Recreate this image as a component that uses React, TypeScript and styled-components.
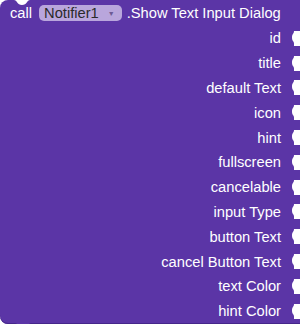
import * as React from 'react';
import styled, { createGlobalStyle } from 'styled-components';

const GlobalStyle = createGlobalStyle`
    html, body {
        margin: 0;
        padding: 0;
        background: #ffffff;
    }
`;

const PURPLE = '#5b35a6';

const params = [
    'id',
    'title',
    'default Text',
    'icon',
    'hint',
    'fullscreen',
    'cancelable',
    'input Type',
    'button Text',
    'cancel Button Text',
    'text Color',
    'hint Color',
];

const Socket = () => (
    <SocketIcon width="8" height="15" viewBox="0 0 8 15">
        <path d="M8 0 H2 C2 3 0 2.5 0 6.5 C0 10.5 2 10 2 12.5 V15 H8 Z" fill="#ffffff" />
    </SocketIcon>
);

export default function App() {
    return (
        <>
            <GlobalStyle />
            <Block>
                <TopNotch width="16" height="6" viewBox="0 0 16 6">
                    <path d="M0 0 C3 0 3 5 8 5 C13 5 13 0 16 0 Z" fill="#ffffff" />
                </TopNotch>
                <Header>
                    <Keyword>call</Keyword>
                    <Dropdown>
                        Notifier1
                        <Arrow>▼</Arrow>
                    </Dropdown>
                    <Keyword>.Show Text Input Dialog</Keyword>
                </Header>
                {params.map((name) => (
                    <Row key={name}>
                        <Label>{name}</Label>
                        <Socket />
                    </Row>
                ))}
                <BottomTab width="16" height="7" viewBox="0 0 16 7">
                    <path d="M0 0 C3 0 4 6 8 6 C12 6 13 0 16 0 Z" fill={PURPLE} />
                </BottomTab>
            </Block>
        </>
    );
}

const Block = styled.div`
    position: relative;
    width: 300px;
    background: ${PURPLE};
    border-radius: 8px 0 0 8px;
    box-shadow: inset 0 -1px 0 #45268a;
    font-family: "Liberation Sans", Arial, sans-serif;
    font-size: 14.7px;
    color: #ffffff;
`;

const TopNotch = styled.svg`
    position: absolute;
    left: 14px;
    top: 0;
`;

const BottomTab = styled.svg`
    position: absolute;
    left: 15px;
    bottom: -6px;
`;

const Header = styled.div`
    display: flex;
    align-items: center;
    height: 26px;
    padding-left: 10px;
    gap: 5px;
`;

const Keyword = styled.span`
    color: #ffffff;
    white-space: nowrap;
`;

const Dropdown = styled.span`
    display: flex;
    align-items: center;
    height: 16px;
    padding: 0 7px 0 5px;
    margin-left: 2px;
    border-radius: 5px;
    background: #b9a6dc;
    color: #2a2a2a;
    white-space: nowrap;
`;

const Arrow = styled.span`
    font-size: 7px;
    color: #6c5a94;
    margin-left: 9px;
`;

const Row = styled.div`
    display: flex;
    align-items: center;
    justify-content: flex-end;
    height: 24.8px;
`;

const Label = styled.span`
    white-space: nowrap;
    margin-right: 11px;
`;

const SocketIcon = styled.svg`
    display: block;
    flex: none;
`;
